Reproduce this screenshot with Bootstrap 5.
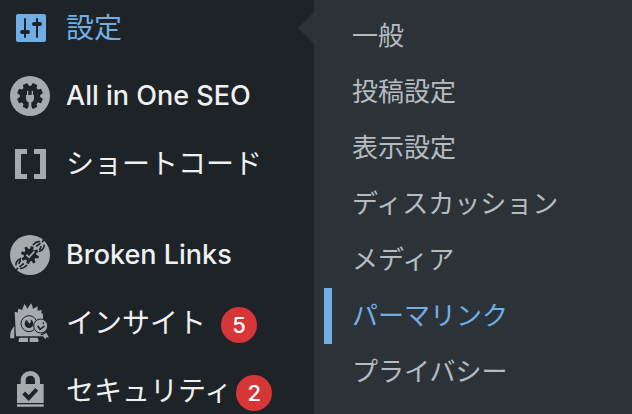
<!DOCTYPE html>
<html lang="ja">
<head>
<meta charset="utf-8">
<meta name="viewport" content="width=device-width, initial-scale=1">
<title>設定</title>
<link href="https://cdn.jsdelivr.net/npm/bootstrap@5.3.0/dist/css/bootstrap.min.css" rel="stylesheet">
<style>
body { background: #2c3338; font-family: Inter, "Noto Sans CJK JP", sans-serif; overflow: hidden; }
.admin-menu { background: #1d2327; flex: 0 0 314px; font-size: 28px; line-height: 36px; }
.menu-link { height: 68px; padding-left: 10px; color: #f0f0f1; white-space: nowrap; }
.menu-link svg { width: 40px; height: 40px; margin-right: 16px; fill: #a7aaad; flex: none; }
.menu-link svg .cut { fill: #1d2327; }
.menu-link svg .line { fill: none; stroke: #1d2327; }
.menu-link svg .round { stroke-linecap: round; }
.menu-link.current { height: 56px; margin-bottom: 6px; color: #72aee6; }
.menu-link.current svg { fill: #72aee6; }
.menu-link.current::after { content: ""; position: absolute; right: 0; border: 16px solid transparent; border-left: 0; border-right-color: #2c3338; }
.latin { font-size: 27px; font-weight: 500; }
.group-start { margin-top: 23px; }
.count { width: 36px; height: 36px; margin: 4px 0 0 4px; background: #d63638; color: #fff; font-size: 22px; font-weight: 500; }
.count-spaced { margin-left: 15px; }
.submenu { background: #2c3338; padding-top: 8px; font-size: 26px; line-height: 36px; }
.sub-link { height: 56px; padding-left: 28px; margin-left: 10px; color: #b5bcc1; }
.sub-link.active { color: #72aee6; border-left: 8px solid #72aee6; padding-left: 20px; }
</style>
<script src="https://cdn.jsdelivr.net/npm/bootstrap@5.3.0/dist/js/bootstrap.bundle.min.js"></script>
</head>
<body>
<div class="d-flex vh-100 overflow-hidden">
  <nav class="admin-menu d-flex flex-column" aria-label="管理メニュー">
    <a href="#" class="menu-link current position-relative d-flex align-items-center flex-shrink-0 text-decoration-none" aria-current="true">
      <svg viewBox="0 0 40 40" aria-hidden="true"><path d="M8 6h26q2 0 2 2v24q0 2-2 2H8q-2 0-2-2V8q0-2 2-2z"/><path class="line round" d="M15 11v18M27 11v18" stroke-width="2"/><path class="line round" d="M12 24h6M24 16h6" stroke-width="4"/></svg>
      <span>設定</span>
    </a>
    <a href="#" class="menu-link d-flex align-items-center flex-shrink-0 text-decoration-none">
      <svg viewBox="18 18 120 120" aria-hidden="true"><circle cx="78" cy="78" r="60"/><g class="cut"><circle cx="78" cy="78" r="31"/><g id="gear-half"><path id="gear-tooth" d="M69 52l1-10q0-3 3-3h10q3 0 3 3l1 10z" transform="rotate(22.5 78 78)"/><use href="#gear-tooth" transform="rotate(45 78 78)"/><use href="#gear-tooth" transform="rotate(90 78 78)"/><use href="#gear-tooth" transform="rotate(135 78 78)"/></g><use href="#gear-half" transform="rotate(180 78 78)"/></g><path d="M69 64q0-2 2-2t2 2v11h10V64q0-2 2-2t2 2v11h3v9q0 10-8 13v23h-8V97q-8-3-8-13v-9h3z"/></svg>
      <span class="latin">All in One SEO</span>
    </a>
    <a href="#" class="menu-link d-flex align-items-center flex-shrink-0 text-decoration-none">
      <svg viewBox="0 0 40 40" aria-hidden="true"><path d="M5 5h12v5h-6v20h6v5H5zM24 5h12v30H24v-5h6V10h-6z"/></svg>
      <span>ショートコード</span>
    </a>
    <a href="#" class="menu-link group-start d-flex align-items-center flex-shrink-0 text-decoration-none">
      <svg viewBox="18 15 120 120" aria-hidden="true"><circle cx="78" cy="75" r="60"/><g class="cut"><circle cx="78" cy="75" r="19"/><g id="link-half"><path id="link-tooth" d="M73 58l1-10h8l1 10z" transform="rotate(15 78 75)"/><use href="#link-tooth" transform="rotate(45 78 75)"/><use href="#link-tooth" transform="rotate(90 78 75)"/><use href="#link-tooth" transform="rotate(135 78 75)"/></g><use href="#link-half" transform="rotate(180 78 75)"/></g><g id="chain" class="line round" stroke-width="5"><path d="M88 44q8-10 18-9M98 48l10-7M107 64q14-7 13-18M111 50l-4 8M115 35l9-8"/></g><use href="#chain" transform="rotate(180 78 75)"/><path d="M67 74l8 8 16-18" fill="none" stroke="#a7aaad" stroke-width="5"/></svg>
      <span class="latin">Broken Links</span>
    </a>
    <a href="#" class="menu-link d-flex align-items-center flex-shrink-0 text-decoration-none">
      <svg viewBox="18 21 120 120" aria-hidden="true"><path d="M36 121L32 48q5-1 9 2l2-12q7 0 11 5l7-19q6 6 9 14l11-16q5 7 6 17l13-8q2 7 1 13l12-2-1 10q6 0 5 5v64z"/><path d="M31 91v36H19q-3-21 12-36zM120 106q11 5 14 20l-6-3-4 7-7-9zM47 125h25v13H44q-1-10 3-13zM77 125h23q5 5 3 13H77z"/><circle class="line" cx="75" cy="83" r="24" stroke-width="3"/><circle class="cut" cx="75" cy="83" r="13"/><path d="M76 83l-9-13 12-2 2 9z"/><circle cx="110" cy="90" r="21" stroke="#1d2327" stroke-width="3"/><path class="line round" d="M102 91l6 9 12-9" stroke-width="5"/><path class="line round" d="M118 80v3M112 116l12-6" stroke-width="4"/></svg>
      <span>インサイト</span>
      <span class="count count-spaced rounded-circle d-flex align-items-center justify-content-center">5</span>
    </a>
    <a href="#" class="menu-link d-flex align-items-center flex-shrink-0 text-decoration-none">
      <svg viewBox="0 0 120 120" aria-hidden="true"><path fill-rule="evenodd" d="M21 39h11V28a29 28 0 0 1 58 0v11h11v57H21zM47 39h28V28a14 14 0 0 0-28 0zM21 100h80v7H21z"/><path class="line" d="M41 66l15 15 24-26" stroke-width="12"/></svg>
      <span>セキュリティ</span>
      <span class="count rounded-circle d-flex align-items-center justify-content-center">2</span>
    </a>
  </nav>
  <nav class="submenu d-flex flex-column flex-grow-1" aria-label="設定">
    <a href="#" class="sub-link d-flex align-items-center flex-shrink-0 text-decoration-none">一般</a>
    <a href="#" class="sub-link d-flex align-items-center flex-shrink-0 text-decoration-none">投稿設定</a>
    <a href="#" class="sub-link d-flex align-items-center flex-shrink-0 text-decoration-none">表示設定</a>
    <a href="#" class="sub-link d-flex align-items-center flex-shrink-0 text-decoration-none">ディスカッション</a>
    <a href="#" class="sub-link d-flex align-items-center flex-shrink-0 text-decoration-none">メディア</a>
    <a href="#" class="sub-link active d-flex align-items-center flex-shrink-0 text-decoration-none" aria-current="page">パーマリンク</a>
    <a href="#" class="sub-link d-flex align-items-center flex-shrink-0 text-decoration-none">プライバシー</a>
  </nav>
</div>
</body>
</html>
